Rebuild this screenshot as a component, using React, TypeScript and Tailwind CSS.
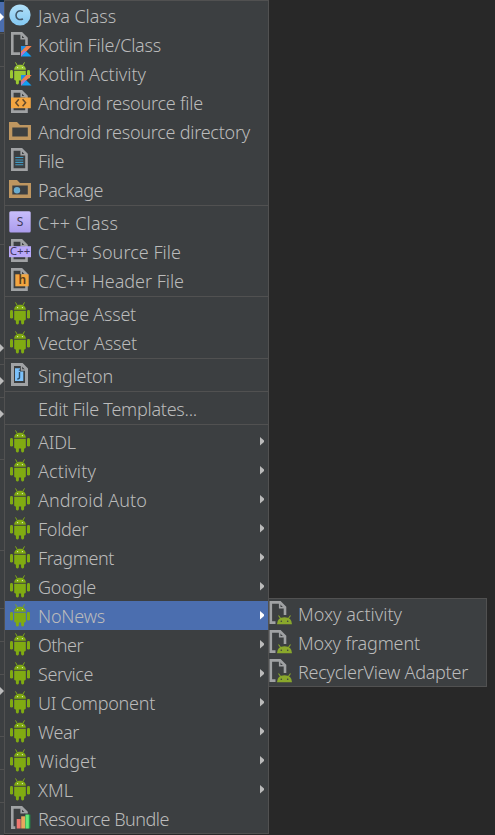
import React from "react";

type Kind =
  | "java" | "kfile" | "kact" | "res" | "dir" | "file" | "pkg" | "cls" | "src"
  | "hdr" | "droid" | "single" | "none" | "bundle" | "moxy";

type Item = { label: string; icon: Kind; width: number; sub?: boolean; on?: boolean };

const groups: Item[][] = [
  [
    { label: "Java Class", icon: "java", width: 78 },
    { label: "Kotlin File/Class", icon: "kfile", width: 123 },
    { label: "Kotlin Activity", icon: "kact", width: 108 },
    { label: "Android resource file", icon: "res", width: 165 },
    { label: "Android resource directory", icon: "dir", width: 212 },
    { label: "File", icon: "file", width: 26 },
    { label: "Package", icon: "pkg", width: 65 },
  ],
  [
    { label: "C++ Class", icon: "cls", width: 80 },
    { label: "C/C++ Source File", icon: "src", width: 143 },
    { label: "C/C++ Header File", icon: "hdr", width: 146 },
  ],
  [
    { label: "Image Asset", icon: "droid", width: 98 },
    { label: "Vector Asset", icon: "droid", width: 99 },
  ],
  [{ label: "Singleton", icon: "single", width: 75 }],
  [{ label: "Edit File Templates...", icon: "none", width: 159 }],
  [
    { label: "AIDL", icon: "droid", width: 38, sub: true },
    { label: "Activity", icon: "droid", width: 58, sub: true },
    { label: "Android Auto", icon: "droid", width: 109, sub: true },
    { label: "Folder", icon: "droid", width: 50, sub: true },
    { label: "Fragment", icon: "droid", width: 76, sub: true },
    { label: "Google", icon: "droid", width: 58, sub: true },
    { label: "NoNews", icon: "droid", width: 67, sub: true, on: true },
    { label: "Other", icon: "droid", width: 45, sub: true },
    { label: "Service", icon: "droid", width: 55, sub: true },
    { label: "UI Component", icon: "droid", width: 117, sub: true },
    { label: "Wear", icon: "droid", width: 41, sub: true },
    { label: "Widget", icon: "droid", width: 58, sub: true },
    { label: "XML", icon: "droid", width: 35, sub: true },
    { label: "Resource Bundle", icon: "bundle", width: 131 },
  ],
];

const moxy: Item[] = [
  { label: "Moxy activity", icon: "moxy", width: 104 },
  { label: "Moxy fragment", icon: "moxy", width: 122 },
  { label: "RecyclerView Adapter", icon: "moxy", width: 170 },
];

const Page = () => (
  <>
    <path d="M12.3 3.4H21.5L26.5 8.4V23.6H12.3Z" fill="none" stroke="#a0a2a4" strokeWidth="2.6" />
    <path d="M21.2 3.5V8.7H26.5" fill="none" stroke="#a0a2a4" strokeWidth="1.6" />
  </>
);

const KotlinMark = () => (
  <>
    <path d="M21 16H31.5L21 26.5Z" fill="#f58436" />
    <path d="M21 16H26.5L21 21.5Z" fill="#1d8fe8" />
    <path d="M21 26.5V22.5L27 16H31.5L26.5 21Z" fill="#f08050" />
    <path d="M21 26.5L26.2 21.3L31.5 26.5Z" fill="#12a0f5" />
    <path d="M21 26.5V23.5L23.8 20.7L26.2 21.3Z" fill="#b078c8" />
  </>
);

const Droid = ({ fill }: { fill: string }) => (
  <g fill={fill}>
    <path d="M14.2 10.8C14.2 7.6 16.8 5.8 20 5.8S25.8 7.6 25.8 10.8Z" />
    <path d="M15.5 3.4L17.2 6.4M24.5 3.4L22.8 6.4" stroke={fill} strokeWidth="1" />
    <path d="M14.2 11.7H25.8V20.3Q25.8 21.4 24.7 21.4H15.3Q14.2 21.4 14.2 20.3Z" />
    <rect x="10" y="11" width="3" height="8.6" rx="1.4" />
    <rect x="27" y="11" width="3" height="8.6" rx="1.4" />
    <rect x="15.9" y="19" width="3" height="6.4" rx="1.3" />
    <rect x="21.1" y="19" width="3" height="6.4" rx="1.3" />
    <circle cx="17.6" cy="8.6" r=".65" fill="#e4eed0" />
    <circle cx="22.4" cy="8.6" r=".65" fill="#e4eed0" />
  </g>
);

const Folder = () => (
  <path fillRule="evenodd" d="M9 5H17L20 8H31V23H9ZM12.3 10.5V19.5H27.8V10.5Z" fill="#be9660" />
);

function Art({ kind }: { kind: Kind }) {
  switch (kind) {
    case "java":
      return (
        <>
          <defs><linearGradient id="jg" x2="0" y2="1"><stop stopColor="#b2e0f8" /><stop offset="1" stopColor="#83c8f2" /></linearGradient></defs>
          <circle cx="20" cy="14" r="10.6" fill="url(#jg)" />
          <path d="M23 10.4Q20 8.9 17.7 10.6Q16 12 16 14.2Q16 16.6 17.8 17.8Q20 19.2 23 18" fill="none" stroke="#42586a" strokeWidth="1.6" />
        </>
      );
    case "kfile":
      return <><Page /><path d="M20 15H33V28H20Z" fill="#3c3f41" /><KotlinMark /></>;
    case "kact":
      return <><Droid fill="#9bc832" /><KotlinMark /></>;
    case "res":
      return (
        <>
          <Page />
          <rect x="11" y="9.5" width="19.8" height="10.7" fill="#f2a541" />
          <path d="M18.8 11.2L15.8 14.7L18.8 18.2M22.6 11.2L25.6 14.7L22.6 18.2" fill="none" stroke="#634a2d" strokeWidth="1.5" />
        </>
      );
    case "dir":
      return <Folder />;
    case "file":
      return <><Page /><path d="M15.3 11.5H23.3M15.3 14H23.3M15.3 16.4H23.3M15.3 18.8H23.3" stroke="#419bc4" strokeWidth="1.1" /></>;
    case "pkg":
      return <><Folder /><circle cx="17" cy="15.3" r="3.2" fill="#6aaccf" /></>;
    case "cls":
      return (
        <>
          <defs><linearGradient id="cg" x2="0" y2="1"><stop stopColor="#c8befc" /><stop offset="1" stopColor="#ab9cec" /></linearGradient></defs>
          <rect x="9.3" y="3.2" width="21.4" height="21.4" rx="1.5" fill="url(#cg)" />
          <text x="20" y="18" textAnchor="middle" fill="#403a58" className="font-['Noto_Sans',sans-serif] text-[12px]">S</text>
        </>
      );
    case "src":
      return (
        <>
          <Page />
          <rect x="9" y="9.2" width="22" height="11" fill="#b9a8f8" />
          <text x="9.8" y="18.3" textLength="20.5" lengthAdjust="spacingAndGlyphs" fill="#3f3760" className="font-['Noto_Sans',sans-serif] text-[10px]">C++</text>
        </>
      );
    case "hdr":
      return (
        <>
          <Page />
          <rect x="15.3" y="8.3" width="13.4" height="12" fill="#f2a541" />
          <text x="22.3" y="18.2" textAnchor="middle" fill="#5a3c18" className="font-['Noto_Sans',sans-serif] text-[12px] font-semibold">h</text>
        </>
      );
    case "droid":
      return <Droid fill="#80ab12" />;
    case "single":
      return (
        <>
          <path d="M12.5 3.5H22L26.5 8V23.5H12.5Z" fill="#3c3f41" stroke="#a0a2a4" strokeWidth="3" />
          <path d="M15 7.2H20V10.5H23.3V20H15Z" fill="#7cc1fa" />
          <path d="M21.5 4V9H26" fill="none" stroke="#a0a2a4" strokeWidth="1.4" />
          <path d="M19.5 11V16.6Q19.5 18 17.3 18M19.5 8.6V9.8" fill="none" stroke="#2c4c66" strokeWidth="1.4" />
        </>
      );
    case "bundle":
      return (
        <>
          <Page />
          <path d="M15.3 14H20V11H24.5V9.5H31V26H15.3Z" fill="#3c3f41" />
          <rect x="16.7" y="15" width="4" height="9.5" fill="#ee7770" />
          <rect x="21.2" y="12.3" width="4" height="12.2" fill="#e8a75d" />
          <rect x="25.5" y="10.6" width="4.8" height="13.9" fill="#1f9b4a" />
          <rect x="25.5" y="10.6" width="3.3" height="13.9" fill="#66e878" />
        </>
      );
    case "moxy":
      return (
        <>
          <Page />
          <path d="M17 26V20Q19 16 24 16H30V26Z" fill="#3c3f41" />
          <path d="M18.5 25.3Q18.7 18.2 26 18.2T33.5 25.3Z" fill="#8aa82c" />
          <path d="M20 16.5L22.5 20M32 16.5L29.5 20" stroke="#8aa82c" strokeWidth="1.1" />
          <circle cx="22.8" cy="22.3" r=".8" fill="#3c3f41" />
          <circle cx="29.2" cy="22.3" r=".8" fill="#3c3f41" />
        </>
      );
    default:
      return null;
  }
}

function Label({ text, width }: { text: string; width: number }) {
  const ref = React.useRef<HTMLSpanElement>(null);
  const [spacing, setSpacing] = React.useState(0);
  React.useLayoutEffect(() => {
    if (ref.current) setSpacing((width - ref.current.getBoundingClientRect().width) / text.length);
  }, [text, width]);
  return (
    <span ref={ref} className="whitespace-pre" style={{ letterSpacing: spacing }}>
      {text}
    </span>
  );
}

function Row({ item, narrow }: { item: Item; narrow?: boolean }) {
  return (
    <li className={`flex h-[29px] items-start ${item.on ? "bg-[#4b6eaf]" : ""}`}>
      <svg className="shrink-0" width={narrow ? 29 : 33} height="29" viewBox={narrow ? "10.5 0 29 29" : "5 0 33 29"}>
        <Art kind={item.icon} />
      </svg>
      <div className="grow text-[18px] font-[350] leading-[30px] text-[#bbbbbb]">
        <Label text={item.label} width={item.width} />
      </div>
      {item.sub && (
        <svg className="mr-1 shrink-0" width="4" height="29" viewBox="0 0 4 29">
          <path d="M0 10L4 13.5V15L0 18.5Z" fill={item.on ? "#ffffff" : "#bbbbbb"} />
        </svg>
      )}
    </li>
  );
}

const lines = [33, 66, 244, 364, 397, 459, 550, 608, 641, 674, 736, 769, 802];
const arrows = [348, 381, 414, 691];

export default function App() {
  return (
    <main className="relative flex h-[835px] w-[495px] items-start overflow-hidden bg-[#282828] font-['Noto_Sans','Open_Sans',sans-serif]">
      <svg className="shrink-0" width="4" height="835" viewBox="0 0 4 835">
        <rect width="4" height="835" fill="#3c3f41" />
        <rect width="4" height="2" fill="#0f2a40" />
        <rect y="2" width="4" height="30" fill="#4b6eaf" />
        <path d="M0 13L4 17L0 21Z" fill="#ffffff" />
        {lines.map((y) => <rect key={y} y={y} width="4" height="1" fill="#515151" />)}
        {arrows.map((y) => <path key={y} d={`M0 ${y - 4}L4 ${y}L0 ${y + 4}Z`} fill="#bbbbbb" />)}
      </svg>
      <nav className="w-[265px] shrink-0 border border-[#515151] bg-[#3c3f41]">
        {groups.map((group, i) => (
          <React.Fragment key={i}>
            {i > 0 && <div className="h-1 pt-px"><div className="h-px bg-[#515151]" /></div>}
            <ul>{group.map((item) => <Row key={item.label} item={item} />)}</ul>
          </React.Fragment>
        ))}
      </nav>
      <nav className="absolute left-[268px] top-[598px] w-[219px] border border-[#515151] bg-[#3c3f41]">
        <ul>{moxy.map((item) => <Row key={item.label} item={item} narrow />)}</ul>
      </nav>
    </main>
  );
}
